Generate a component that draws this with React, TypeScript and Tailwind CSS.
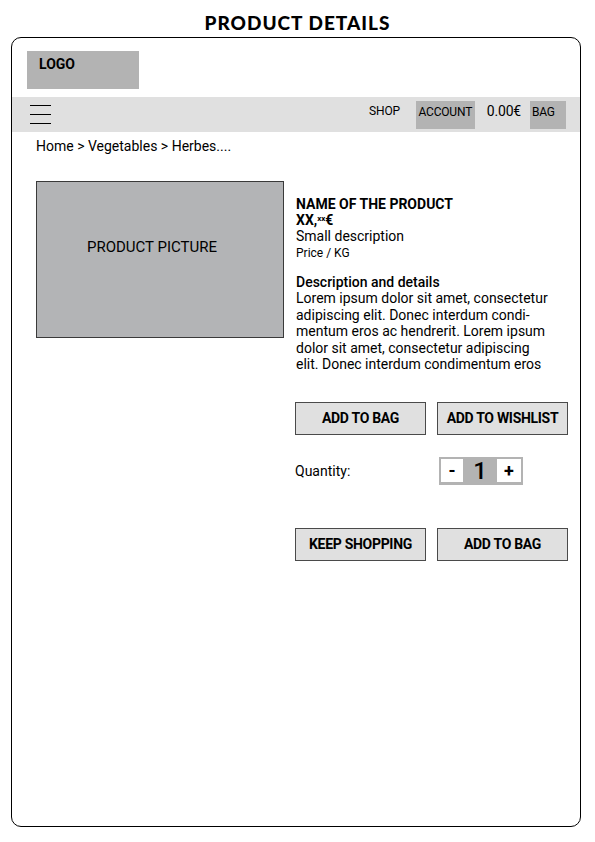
import React from 'react';

const roboto = { fontFamily: 'Roboto, "Liberation Sans", sans-serif' };

function Btn({ label }: { label: string }) {
  return (
    <button className="h-[33px] w-[131px] border border-[#4a4a4a] bg-[#e0e0e0] text-[14px] font-bold text-black tracking-[-0.3px]">
      {label}
    </button>
  );
}

export default function App() {
  return (
    <div className="w-[595px] h-[842px] bg-white text-black" style={roboto}>
      <h1
        className="pt-[9px] h-[37px] text-center text-[19px] font-black tracking-[1px]"
        style={{ fontFamily: 'Lato, "DejaVu Sans", sans-serif' }}
      >
        PRODUCT DETAILS
      </h1>

      <div className="ml-[11px] w-[570px] h-[790px] rounded-[10px] border border-black overflow-hidden">
        {/* LOGO */}
        <div className="pt-[13px] pl-[15px] h-[59px]">
          <div className="w-[112px] h-[38px] bg-[#b3b3b3] pl-[12px] pt-[3px] text-[14px] font-bold">LOGO</div>
        </div>

        {/* NAV */}
        <div className="h-[35px] bg-[#e0e0e0] flex items-center pl-[18px] pr-[14px]">
          <div className="flex flex-col gap-[8px]">
            <span className="block w-[21px] h-[1px] bg-black" />
            <span className="block w-[21px] h-[1px] bg-black" />
            <span className="block w-[21px] h-[1px] bg-black" />
          </div>
          <div className="ml-auto flex items-center h-full text-[12px] tracking-[-0.2px]">
            <span className="mr-[16px] -mt-[7px]">SHOP</span>
            <span className="h-[28px] w-[59px] bg-[#b3b3b3] flex justify-center pt-[2px] mr-[12px]">ACCOUNT</span>
            <span className="text-[14px] mr-[9px] -mt-[7px]">0.00€</span>
            <span className="h-[28px] w-[36px] bg-[#b3b3b3] pl-[2px] pt-[2px]">BAG</span>
          </div>
        </div>

        {/* BREADCRUMB */}
        <div className="pl-[24px] pt-[6px] text-[14px] leading-[17px]">Home &gt; Vegetables &gt; Herbes....</div>

        {/* PRODUCT */}
        <div className="flex pl-[24px] pt-[26px]">
          <div className="w-[248px] h-[157px] shrink-0 border border-[#3a3a3a] bg-[#b3b4b6] pt-[54px] pr-[16px] text-center text-[15px]">
            PRODUCT PICTURE
          </div>

          <div className="pl-[12px] pt-[15px] w-[285px]">
            <div className="text-[14px] font-bold leading-[16px]">NAME OF THE PRODUCT</div>
            <div className="h-[16px] text-[14px] font-bold leading-[16px]">
              XX,<span className="relative -top-[4px] text-[8px] leading-none">xx</span>€
            </div>
            <div className="text-[14px] leading-[16px]">Small description</div>
            <div className="text-[12px] leading-[16px] pt-[1px]">Price / KG</div>

            <div className="mt-[13px] text-[14px] font-medium leading-[16px]">Description and details</div>
            <p className="text-[14px] leading-[16.6px] w-[256px]">
              Lorem ipsum dolor sit amet, consectetur adipiscing elit. Donec interdum condi-
              mentum eros ac hendrerit. Lorem ipsum dolor sit amet, consectetur adipiscing elit. Donec
              interdum condimentum eros
            </p>

            <div className="-ml-[1px] mt-[29px] flex gap-[11px]">
              <Btn label="ADD TO BAG" />
              <Btn label="ADD TO WISHLIST" />
            </div>

            <div className="-ml-[1px] mt-[22px] flex items-center">
              <span className="w-[144px] text-[14px] pt-[2px]">Quantity:</span>
              <div className="flex items-center h-[28px] w-[84px] bg-[#b3b3b3] px-[2px]">
                <span className="h-[23px] w-[22px] bg-white flex items-center justify-center text-[18px] font-bold">-</span>
                <span className="flex-1 text-center text-[24px] font-medium leading-none">1</span>
                <span className="h-[23px] w-[24px] bg-white flex items-center justify-center text-[18px] font-bold">+</span>
              </div>
            </div>

            <div className="-ml-[1px] mt-[43px] flex gap-[11px]">
              <Btn label="KEEP SHOPPING" />
              <Btn label="ADD TO BAG" />
            </div>
          </div>
        </div>
      </div>
    </div>
  );
}
